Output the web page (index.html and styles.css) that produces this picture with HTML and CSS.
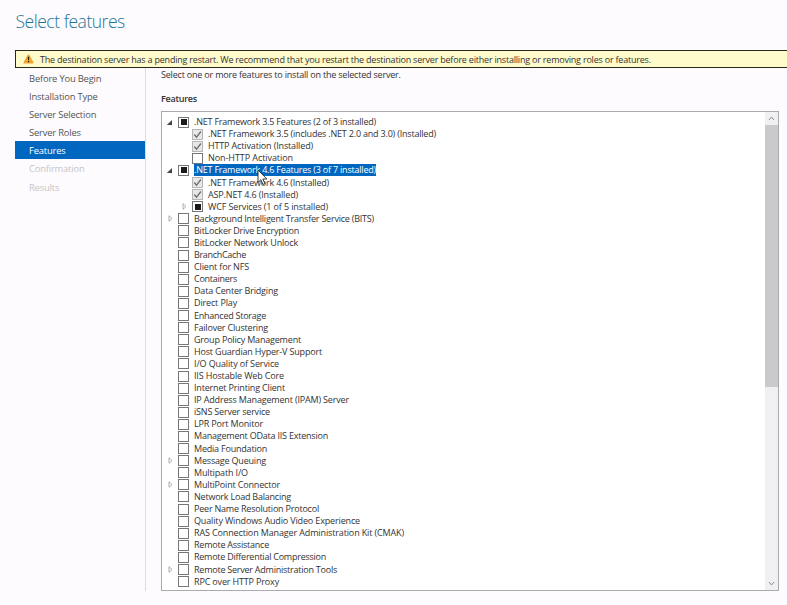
FILE: index.html
```
<!DOCTYPE html>
<html lang="en">
<head>
<meta charset="utf-8">
<title>Select features</title>
<link rel="stylesheet" href="styles.css">
</head>
<body>
<main class="wizard">
  <h1 class="title">Select features</h1>
  <div class="notice">
    <svg class="warn" viewBox="0 0 12 11"><path d="M5.2.8Q6-.3 6.8.8L11.6 9.3Q11.9 10.5 10.8 10.5H1.2Q.1 10.5.4 9.3Z" fill="#f7a32b"/><path d="M5.2 3h1.6l-.3 4h-1zM5.3 7.8h1.4v1.4H5.3z" fill="#2b2112"/></svg>
    <span>The destination server has a pending restart. We recommend that you restart the destination server before either installing or removing roles or features.</span>
  </div>
  <div class="body">
    <nav class="steps">
      <div class="step">Before You Begin</div>
      <div class="step">Installation Type</div>
      <div class="step">Server Selection</div>
      <div class="step">Server Roles</div>
      <div class="step current">Features</div>
      <div class="step off">Confirmation</div>
      <div class="step off">Results</div>
    </nav>
    <section class="pane">
      <p class="intro">Select one or more features to install on the selected server.</p>
      <h2 class="heading">Features</h2>
      <div class="listbox">
        <div class="tree" id="tree"></div>
        <div class="scroll">
          <svg class="arrow" viewBox="0 0 13 13"><path d="M4 8l2.5-3L9 8" fill="none" stroke="#8c8c8c"/></svg>
          <div class="thumb"></div>
          <svg class="arrow down" viewBox="0 0 13 13"><path d="M4 5l2.5 3L9 5" fill="none" stroke="#8c8c8c"/></svg>
        </div>
      </div>
    </section>
  </div>
  <svg class="cursor" viewBox="0 0 11 17"><path d="M1 1v12.4l2.9-2.7 2 4.8 2-.9-2-4.6h4z" fill="#fff" stroke="#222" stroke-width=".9"/></svg>
</main>
<script src="tree.js"></script>
</body>
</html>
```
FILE: tree.js
```
// label, check state, arrow, nesting level, label width
const rows = [
  [".NET Framework 3.5 Features (2 of 3 installed)", "part", "open", 0, 182],
  [".NET Framework 3.5 (includes .NET 2.0 and 3.0) (Installed)", "done", "", 1, 228],
  ["HTTP Activation (Installed)", "done", "", 1, 105],
  ["Non-HTTP Activation", "", "", 1, 85],
  [".NET Framework 4.6 Features (3 of 7 installed)", "part", "open", 0, 182, true],
  [".NET Framework 4.6 (Installed)", "done", "", 1, 121],
  ["ASP.NET 4.6 (Installed)", "done", "", 1, 90],
  ["WCF Services (1 of 5 installed)", "part", "closed", 1, 120],
  ["Background Intelligent Transfer Service (BITS)", "", "closed", 0, 180],
  ["BitLocker Drive Encryption", "", "", 0, 105],
  ["BitLocker Network Unlock", "", "", 0, 104],
  ["BranchCache", "", "", 0, 52],
  ["Client for NFS", "", "", 0, 55],
  ["Containers", "", "", 0, 43],
  ["Data Center Bridging", "", "", 0, 84],
  ["Direct Play", "", "", 0, 43],
  ["Enhanced Storage", "", "", 0, 72],
  ["Failover Clustering", "", "", 0, 74],
  ["Group Policy Management", "", "", 0, 107],
  ["Host Guardian Hyper-V Support", "", "", 0, 128],
  ["I/O Quality of Service", "", "", 0, 85],
  ["IIS Hostable Web Core", "", "", 0, 90],
  ["Internet Printing Client", "", "", 0, 91],
  ["IP Address Management (IPAM) Server", "", "", 0, 155],
  ["iSNS Server service", "", "", 0, 76],
  ["LPR Port Monitor", "", "", 0, 69],
  ["Management OData IIS Extension", "", "", 0, 134],
  ["Media Foundation", "", "", 0, 73],
  ["Message Queuing", "", "closed", 0, 72],
  ["Multipath I/O", "", "", 0, 54],
  ["MultiPoint Connector", "", "closed", 0, 86],
  ["Network Load Balancing", "", "", 0, 97],
  ["Peer Name Resolution Protocol", "", "", 0, 125],
  ["Quality Windows Audio Video Experience", "", "", 0, 166],
  ["RAS Connection Manager Administration Kit (CMAK)", "", "", 0, 210],
  ["Remote Assistance", "", "", 0, 75],
  ["Remote Differential Compression", "", "", 0, 132],
  ["Remote Server Administration Tools", "", "closed", 0, 143],
  ["RPC over HTTP Proxy", "", "", 0, 85]
];
const arrows = {
  open: '<svg viewBox="0 0 7 7"><path d="M6 1v5H.8z" fill="#444"/></svg>',
  closed: '<svg viewBox="0 0 7 7"><path d="M3 .7v5.6L6 3.5z" fill="#fff" stroke="#999" stroke-width=".8"/></svg>',
  "": ""
};
const marks = {
  part: '<i class="fill"></i>',
  done: '<svg viewBox="0 0 9 9"><path d="M1.2 4.5l2.3 2.6L7.9 1.5" fill="none" stroke="#707070" stroke-width="1.4"/></svg>',
  "": ""
};
const tree = document.getElementById("tree");
for (const [text, state, arrow, level, width, selected] of rows) {
  const row = document.createElement("div");
  row.className = "row level" + level;
  row.innerHTML = `<span class="toggle">${arrows[arrow]}</span><span class="box ${state}">${marks[state]}</span><span class="label${selected ? " selected" : ""}">${text}</span>`;
  tree.append(row);
  const label = row.lastChild;
  const natural = label.getBoundingClientRect().width;
  label.style.letterSpacing = (width - natural) / text.length + "px";
}
```
FILE: styles.css
```
* { box-sizing: border-box; }
body {
  margin: 0;
  background: #fdfbfe;
  color: #333;
  font-family: "Open Sans", "Noto Sans", sans-serif;
  font-size: 9px;
}
svg { display: block; }
.wizard {
  position: relative;
  width: 787px;
  height: 605px;
  overflow: hidden;
  display: flex;
  flex-direction: column;
}
.title {
  margin: 0;
  height: 50px;
  padding: 8px 0 0 15.5px;
  font-size: 17.5px;
  line-height: 26px;
  font-weight: 300;
  letter-spacing: -0.47px;
  color: #1e7597;
}
.notice {
  height: 18px;
  margin-left: 15px;
  padding-left: 7px;
  display: flex;
  align-items: center;
  gap: 6px;
  border: 1px solid #28281c;
  border-right: 0;
  background: #fffbcb;
  white-space: nowrap;
  letter-spacing: -0.21px;
}
.warn { width: 11px; height: 10px; }
.body { flex: 1; display: flex; }
.steps {
  width: 146px;
  height: 523px;
  padding: 1px 0 0 15px;
  border-right: 1px solid #dcdbdd;
}
.step {
  height: 18.1px;
  padding-left: 14px;
  line-height: 19px;
  font-size: 9.4px;
  letter-spacing: -0.18px;
  color: #555;
}
.current { background: #0067c0; color: #fff; }
.off { color: #c6c5c7; }
.pane { padding-left: 15px; width: 633px; }
.intro { margin: 0; height: 24px; line-height: 14px; letter-spacing: -0.2px; }
.heading { margin: 0; height: 19px; line-height: 13px; font-size: 9px; font-weight: 600; letter-spacing: -0.25px; }
.listbox {
  height: 480px;
  width: 618px;
  display: flex;
  border: 1px solid #aaa9ad;
  background: #fff;
}
.tree { flex: 1; padding-top: 4px; }
.row { display: flex; align-items: center; height: 12.105px; padding-left: 4px; white-space: nowrap; }
.level1 { padding-left: 18px; }
.toggle { width: 12px; }
.toggle svg { width: 7px; height: 7px; }
.box {
  width: 11px;
  height: 11px;
  flex: none;
  border: 1px solid #777;
  background: #fff;
}
.box svg { width: 9px; height: 9px; }
.done { background: #e8e8e8; border-color: #b5b5b5; }
.part { padding: 1.5px; }
.fill { display: block; width: 6px; height: 6px; background: #1b1b1b; }
.label { margin-left: 5px; line-height: 12px; }
.selected { background: #0067c0; color: #fff; }
.scroll { width: 13px; display: flex; flex-direction: column; background: #f0eff1; }
.arrow { width: 13px; height: 13px; }
.thumb { height: 262px; background: #cac9cb; }
.down { margin-top: auto; }
.cursor { position: absolute; left: 257px; top: 169px; width: 11px; height: 17px; }
```
